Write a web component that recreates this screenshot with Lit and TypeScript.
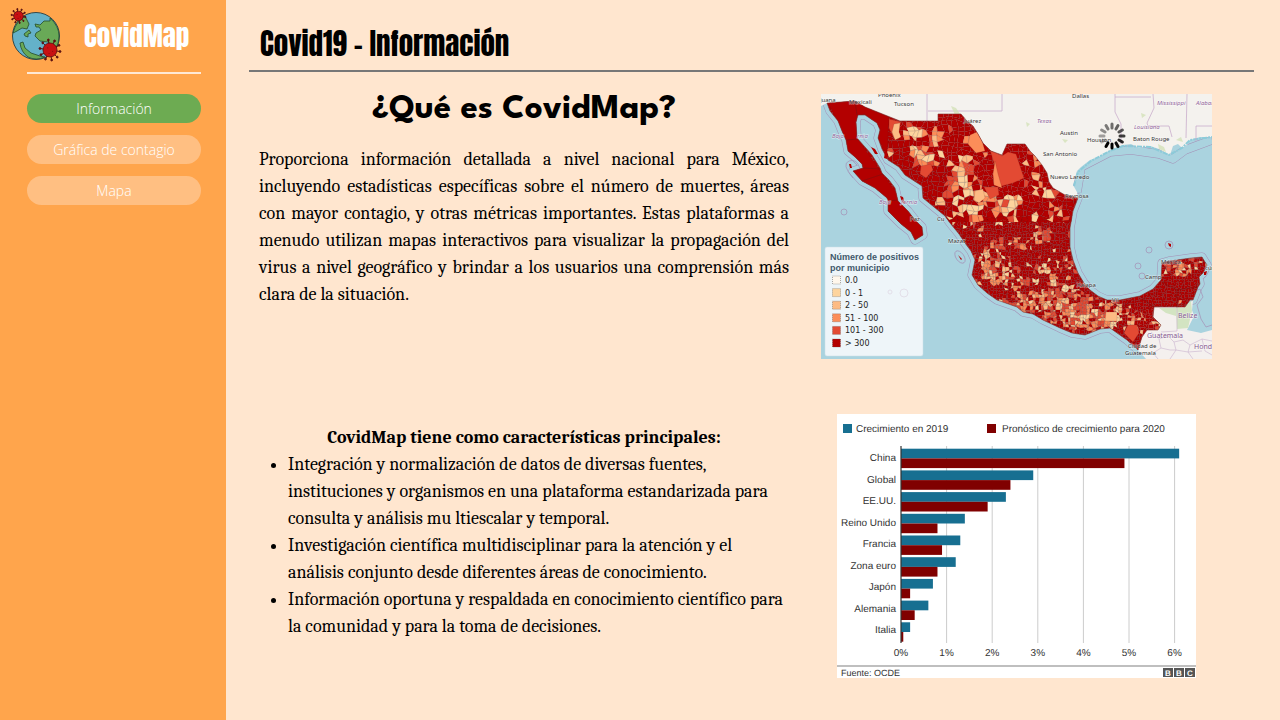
import { LitElement, html, svg, css } from "lit";
import { customElement, state } from "lit/decorators.js";

const MEXICO =
  "6,9 34,7 44,13 79,27 117,27 117,20 140,20 146,27 152,32 157,40 162,49 170,57 181,61 186,50 204,50 209,57 214,62 221,71 226,79 228,88 232,94 244,101 257,104 252,117 249,134 249,153 252,166 257,179 263,189 269,196 277,202 286,206 299,206 319,202 332,195 340,186 341,169 348,167 356,166 370,164 381,163 384,168 386,171 382,179 378,183 379,190 377,193 372,206 369,206 364,213 333,213 332,223 340,231 337,236 326,236 321,243 317,256 306,246 289,234 279,235 264,241 251,239 239,234 222,226 212,220 202,218 196,213 176,206 166,199 157,191 151,181 154,166 150,157 144,149 138,140 129,129 124,122 102,104 101,92 84,81 78,73 67,66 61,55 57,44 59,36 56,29 44,21 37,21 35,28 36,44 44,53 51,61 59,74 61,79 68,86 74,94 77,107 87,117 94,126 101,133 102,141 94,146 90,138 80,130 67,117 67,107 66,104 54,94 41,87 32,77 42,74 41,70 34,63 27,57 25,46 21,37 17,27 9,17";

const US_LAND =
  "0,0 391,0 391,43 379,43 369,46 366,51 361,54 357,50 352,52 349,61 338,55 329,52 318,54 310,50 302,51 289,56 278,63 269,66 260,73 256,77 252,91 256,98 257,104 200,110 81,45 60,24 34,9 6,9 0,12";

const SOUTH_LAND = "333,213 364,213 372,206 371,216 373,222 366,236 380,239 391,236 391,265 325,265 317,256 321,243 300,225";

const SHADES = ["#b30000", "#e34a33", "#fc8d59", "#fdbb84", "#fdd49e"];

// Areas with fewer cases: centre x, centre y, radius x, radius y, share of lighter cells
const ZONES = [
  [90, 40, 16, 12, 0.75],
  [99, 60, 20, 13, 0.75],
  [109, 46, 12, 16, 0.7],
  [135, 72, 17, 18, 0.7],
  [156, 95, 18, 16, 0.65],
  [125, 90, 10, 10, 0.5],
  [150, 115, 16, 10, 0.6],
  [185, 112, 18, 14, 0.6],
  [212, 68, 10, 14, 0.5],
  [222, 92, 16, 14, 0.55],
  [195, 88, 14, 14, 0.4],
  [232, 118, 14, 12, 0.5],
  [225, 140, 14, 12, 0.45],
  [174, 165, 18, 20, 0.65],
  [165, 180, 14, 14, 0.65],
  [192, 150, 18, 10, 0.35],
  [188, 185, 20, 10, 0.45],
  [205, 208, 22, 12, 0.6],
  [228, 180, 18, 16, 0.45],
  [248, 170, 10, 18, 0.5],
  [240, 210, 24, 22, 0.85],
  [264, 220, 26, 20, 0.9],
  [288, 220, 14, 16, 0.85],
  [309, 226, 14, 16, 0.55],
  [335, 228, 7, 6, 0.8],
  [355, 174, 14, 8, 0.8],
  [366, 166, 14, 6, 0.6],
  [384, 173, 3, 5, 0.8],
];

function noise(a: number, b: number, c = 0): number {
  const v = Math.sin(a * 127.1 + b * 311.7 + c * 74.7) * 43758.5453;
  return v - Math.floor(v);
}

function lightShare(x: number, y: number): number {
  let share = x < 60 || (x < 100 && y > 85) ? 0 : 0.05;
  for (const [cx, cy, rx, ry, p] of ZONES) {
    const d = ((x - cx) / rx) ** 2 + ((y - cy) / ry) ** 2;
    if (d < 1) share = Math.max(share, p * (1 - d * 0.45));
  }
  return share;
}

function cells(size: number, top: number, bottom: number) {
  const out = [];
  const corner = (i: number, j: number) =>
    `${((i + noise(i, j, 1) * 0.9) * size).toFixed(1)},${(top + (j + noise(i, j, 2) * 0.9) * size).toFixed(1)}`;
  const rows = Math.ceil((bottom - top) / size);
  for (let j = -1; j < rows; j++) {
    for (let i = 0; i * size < 391; i++) {
      const x = (i + 0.5) * size;
      const y = top + (j + 0.5) * size;
      // Neighbouring cells often share a shade, so they read as one district
      const joined = noise(i, j, 6) < 0.6;
      const gi = joined ? Math.floor(i / 2) : i;
      const gj = joined ? Math.floor(j / 2) : j;
      const light = noise(gi, gj, 3) < lightShare(x, y);
      const tone = light ? 1 + Math.floor(noise(gi, gj, 4) ** 1.4 * 4) : 0;
      out.push(svg`<polygon points="${corner(i, j)} ${corner(i + 1, j)} ${corner(i + 1, j + 1)} ${corner(i, j + 1)}" fill=${SHADES[tone]}></polygon>`);
    }
  }
  return out;
}

const PLACES: [number, number, string][] = [
  [-6, 8, "Tijuana"], [28, 10, "Mexicali"], [57, 3, "Phoenix"], [73, 12, "Tucson"], [143, 29, "Juárez"],
  [251, 4, "Dallas"], [239, 41, "Austin"], [266, 48, "Houston"], [312, 47, "Baton Rouge"],
  [222, 62, "San Antonio"], [229, 85, "Nuevo Laredo"], [244, 104, "Reynosa"],
  [89, 127, "Paz"], [116, 127, "Cu"], [127, 149, "Mazat"], [256, 193, "Xalapa"], [291, 208, "Vil"],
  [340, 170, "Mérida"], [324, 185, "Camp"], [384, 176, "cún"],
  [307, 254, "Ciudad de"], [304, 261, "Guatemala"],
];

const REGIONS: [number, number, string, number][] = [
  [216, 29, "Texas", 6], [336, 11, "Mississippi", 6], [375, 11, "Alabama", 6], [313, 35, "Louisiana", 6],
  [11, 44, "Baja", 6], [36, 44, "rnia", 6], [58, 110, "Baja", 6], [80, 110, "fornia", 6],
];

const COUNTRIES: [number, number, string][] = [[357, 224, "Belize"], [326, 244, "Guatemala"], [373, 255, "Hondura"]];

const LEGEND = [
  ["#fff7ec", "0.0"], ["#fdd49e", "0 - 1"], ["#fdbb84", "2 - 50"],
  ["#fc8d59", "51 - 100"], ["#e34a33", "101 - 300"], ["#b30000", "> 300"],
];

const GROWTH: [string, number, number][] = [
  ["China", 6.1, 4.9], ["Global", 2.9, 2.4], ["EE.UU.", 2.3, 1.9], ["Reino Unido", 1.4, 0.8],
  ["Francia", 1.3, 0.9], ["Zona euro", 1.2, 0.8], ["Japón", 0.7, 0.2], ["Alemania", 0.6, 0.3], ["Italia", 0.2, 0.05],
];

@customElement("case-map")
class CaseMap extends LitElement {
  static styles = css`
    :host { display: block; }
    .map { display: block; width: 100%; height: auto; }
    .place { font: 6px "Noto Sans", sans-serif; fill: #333; stroke: #fff; stroke-width: 1; stroke-opacity: 0.5; paint-order: stroke; }
    .region { font-family: "Noto Sans", sans-serif; font-style: italic; fill: #93679b; stroke: #fff; stroke-width: 1; stroke-opacity: 0.6; paint-order: stroke; }
    .country { font: 7px "Noto Sans", sans-serif; fill: #85598f; stroke: #fff; stroke-width: 1; stroke-opacity: 0.6; paint-order: stroke; }
    .heading { font: bold 9px "Liberation Sans", sans-serif; fill: #41586b; }
    .entry { font: 8px "DejaVu Sans", sans-serif; fill: #222; }
  `;

  render() {
    return html`
      <svg class="map" viewBox="0 0 391 265" role="img" aria-label="Número de positivos por municipio">
        <defs>
          <clipPath id="country"><polygon points=${MEXICO}></polygon></clipPath>
          <clipPath id="north"><rect width="391" height="128"></rect></clipPath>
        </defs>
        <rect width="391" height="265" fill="#aad3df"></rect>
        <g fill="none" stroke="#a58fb5" stroke-width="9" stroke-linejoin="round">
          <polygon points=${MEXICO}></polygon>
          <polyline points="256,98 260,73 289,58 310,56 338,60 352,65 364,56 391,46"></polyline>
        </g>
        <g fill="none" stroke="#aad3df" stroke-width="8" stroke-linejoin="round">
          <polygon points=${MEXICO}></polygon>
          <polyline points="256,98 260,73 289,58 310,56 338,60 352,65 364,56 391,46"></polyline>
        </g>
        <polygon points=${US_LAND} fill="#f4f2ee"></polygon>
        <polyline points="253,92 257,78 270,67 289,57 302,52 329,53 348,61 361,54 369,46 391,43" fill="none" stroke="#8ccbd9" stroke-width="2" stroke-dasharray="5 1 2 1"></polyline>
        <g fill="none" stroke="#c9adcb" stroke-width="0.8">
          <path d="M106,0V27M181,0V17H107M294,0V18L300,30V50M294,3H330M332,0L333,14L326,29L327,32H348L351,43M366,0L365,44M375,47V32H391"></path>
        </g>
        <g fill="#cfdfb0" opacity="0.7">
          <path d="M130,12l5,2 4,6 -5,1zM337,50l6,3 2,5 -7,-3zM205,28l4,2 -3,3zM241,45l6,1 -3,3zM320,19l5,2 -4,3zM355,46l5,-3 2,5z"></path>
        </g>
        <polygon points=${SOUTH_LAND} fill="#f4f0ee"></polygon>
        <path d="M338,214H355V222L345,219ZM355,213L362,214 370,207 371,217 367,234 356,235Z" fill="#d3e4c2"></path>
        <g fill="none" stroke="#c9b2cf" stroke-width="0.6">
          <path d="M356,213V237L340,238M330,238l8,7 9,-3 6,6 9,-2 7,5 12,-6 10,2M338,245l2,9 -8,5 5,6M353,248l2,8 -6,9M369,251l-2,7 5,7M381,245l3,12 7,4M340,254l9,2 6,0 12,2 14,-1"></path>
        </g>
        <g fill="none" stroke="#a58fb5" stroke-width="0.7">
          <circle cx="23" cy="118" r="3"></circle>
          <circle cx="328" cy="156" r="3"></circle>
          <circle cx="317" cy="172" r="3"></circle>
          <circle cx="321" cy="182" r="3"></circle>
          <circle cx="348" cy="151" r="4"></circle>
          <ellipse cx="139" cy="163" rx="4" ry="7" transform="rotate(-35 139 163)"></ellipse>
          <path d="M32,84Q20,70 28,67T39,75M374,197l5,-2 3,8 -6,8 4,14 5,8 6,-2"></path>
        </g>
        <g clip-path="url(#country)">
          <g stroke="#54201c" stroke-width="0.3" stroke-opacity="0.45">
            ${cells(3, 124, 265)}
            <g clip-path="url(#north)">${cells(5, 0, 132)}</g>
            <path d="M149,41L158,37 164,57 155,59 147,50Z" fill="#fc8d59"></path>
            <path d="M169,56L181,62 187,58 195,60 203,84 192,89 177,93 174,72Z" fill="#e34a33"></path>
            <path d="M174,67L172,80 173,91 181,94 177,80Z" fill="#fc8d59"></path>
            <path d="M68,25L80,28 78,36 73,44 68,34Z" fill="#e34a33"></path>
            <path d="M73,30L79,29 78,38 80,43 74,46 71,38Z" fill="#fdbb84"></path>
            <path d="M100,72L110,70 112,76 105,84 99,80Z" fill="#e34a33"></path>
            <path d="M154,97L162,95 164,104 158,109 153,106Z" fill="#fdbb84"></path>
            <path d="M163,93L177,93 178,101 169,105Z" fill="#e34a33"></path>
            <path d="M285,218L296,218 296,227 284,227Z" fill="#fdbb84"></path>
            <path d="M307,231L316,231 318,239 312,248 303,239Z" fill="#e34a33"></path>
            <path d="M7,9L34,6 44,13 68,23 66,62 57,44 59,34 44,20 36,22 36,44 60,78 101,133 102,142 94,147 66,117 30,77 27,57 17,27Z" fill="#b30000"></path>
          </g>
          <path d="M34,7L36,21M25,46L37,45M42,74L60,75M41,87L62,80M67,107L77,106M286,206L300,214 310,207M319,202L332,213M341,188L356,196 377,193M356,196V213" fill="none" stroke="#751010" stroke-width="0.5"></path>
        </g>
        <polygon points=${MEXICO} fill="none" stroke="#7f3434" stroke-width="0.6"></polygon>
        <g fill="#b30000">
          <path d="M50,53l4,2 3,5 -3,0zM64,58l3,2 -1,5 -3,-1zM28,70l2,0 1,4 -2,0zM79,102l3,1 2,7 -3,-2zM347,149l3,1 0,3 -2,-1zM383,178l3,-1 -1,4 -2,0zM137,161l4,4 -1,1z"></path>
        </g>
        ${PLACES.map(([x, y, name]) => svg`<text class="place" x=${x} y=${y}>${name}</text>`)}
        ${REGIONS.map(([x, y, name, size]) => svg`<text class="region" x=${x} y=${y} font-size=${size}>${name}</text>`)}
        ${COUNTRIES.map(([x, y, name]) => svg`<text class="country" x=${x} y=${y}>${name}</text>`)}
        <g stroke-width="3" stroke-linecap="round">
          ${Array.from({ length: 12 }, (_, i) => svg`<path d="M291,34V30" stroke="#000" stroke-opacity=${[0.55, 0.6, 0.65, 0.75, 0.85, 0.95, 1, 1, 0.25, 0.35, 0.42, 0.5][i]} transform="rotate(${i * 30} 291 42)"></path>`)}
        </g>
        <rect x="4" y="153" width="98" height="109" rx="2" fill="#f3f7fb" fill-opacity="0.93" stroke="#cbdde5" stroke-width="0.5"></rect>
        <g fill="none" stroke="#e3dfe9"><circle cx="69" cy="198" r="2"></circle><circle cx="83" cy="199" r="4"></circle></g>
        <text class="heading" x="9" y="166">Número de positivos</text>
        <text class="heading" x="9" y="177">por municipio</text>
        ${LEGEND.map(([color, label], i) => svg`
          <rect x="11.500" y=${182 + i * 12.6} width="8" height="8" fill=${color} stroke="#555" stroke-width="0.5" stroke-dasharray="1 1"></rect>
          <text class="entry" x="24" y=${189 + i * 12.6}>${label}</text>`)}
      </svg>
    `;
  }
}

@customElement("growth-chart")
class GrowthChart extends LitElement {
  static styles = css`
    :host { display: block; }
    .chart { display: block; width: 100%; height: auto; font: 10px "Liberation Sans", Arial, sans-serif; fill: #333; text-rendering: geometricPrecision; }
    .source { font-size: 9px; }
    .badge { font-size: 8px; font-weight: bold; fill: #fff; }
  `;

  render() {
    const unit = 45.6;
    return html`
      <svg class="chart" viewBox="0 0 359 264" role="img" aria-label="Crecimiento en 2019 y pronóstico para 2020">
        <rect width="359" height="264" fill="#fff"></rect>
        <rect x="6" y="10" width="9" height="9" fill="#176f91"></rect>
        <text x="19" y="18">Crecimiento en 2019</text>
        <rect x="150" y="10" width="9" height="9" fill="#800000"></rect>
        <text x="165" y="18">Pronóstico de crecimiento para 2020</text>
        ${[1, 2, 3, 4, 5, 6].map((n) => svg`<path d="M${64 + n * unit},32V229" stroke="#ccc"></path>`)}
        ${GROWTH.map(([name, now, next], i) => {
          const y = 34.7 + i * 21.7;
          return svg`
            <text x="59" y=${47 + i * 21.5} text-anchor="end">${name}</text>
            <rect x="64" y=${y} width=${now * unit} height="9.700" fill="#176f91"></rect>
            <rect x="64" y=${y + 9.7} width=${next * unit} height="9.700" fill="#800000"></rect>`;
        })}
        <path d="M64,32V229" stroke="#333" stroke-width="1.200"></path>
        ${[0, 1, 2, 3, 4, 5, 6].map((n) => svg`<text x=${64 + n * unit} y="242" text-anchor="middle">${n}%</text>`)}
        <path d="M0,252H359" stroke="#aaa" stroke-width="1.500"></path>
        <text class="source" x="4" y="262">Fuente: OCDE</text>
        ${["B", "B", "C"].map((letter, i) => svg`
          <rect x=${326 + i * 11} y="254" width="10" height="9" fill="#555"></rect>
          <text class="badge" x=${331 + i * 11} y="261.500" text-anchor="middle">${letter}</text>`)}
      </svg>
    `;
  }
}

const virus = (x: number, y: number, r: number) => svg`
  <g stroke="#5a0f10" fill="#5a0f10" stroke-width="1">
    ${Array.from({ length: 10 }, (_, i) => {
      const a = (i * Math.PI) / 5 + 0.15;
      const px = x + Math.cos(a) * r * 1.45;
      const py = y + Math.sin(a) * r * 1.45;
      return svg`<path d="M${x},${y}L${px},${py}"></path><circle cx=${px} cy=${py} r=${r * 0.13}></circle>`;
    })}
  </g>
  <circle cx=${x} cy=${y} r=${r} fill="#c80f12" stroke="#5a0f10" stroke-width="0.8"></circle>
  <path d="M${x - r * 0.4},${y - r * 0.3}h1M${x + r * 0.3},${y + r * 0.2}h1M${x - r * 0.2},${y + r * 0.5}h1" stroke="#8b0d10"></path>`;

@customElement("app-root")
class AppRoot extends LitElement {
  static styles = css`
    :host { display: block; }
    * { box-sizing: border-box; }
    .app { display: flex; min-height: 100vh; background: #ffe6cf; color: #000; }
    .sidebar { flex: 0 0 226px; background: #ffa54c; }
    .brand { display: flex; align-items: center; height: 72px; padding: 0 12px; gap: 22px; }
    .globe { width: 50px; height: 54px; flex: none; overflow: visible; }
    .name { color: #fff; }
    .name, .title {
      margin: 0;
      font-family: Anton, "Roboto Condensed", "Liberation Sans Narrow", Impact, sans-serif;
      font-weight: 400;
      white-space: nowrap;
    }
    .name { font-size: 27px; line-height: 72px; }
    .menu { display: flex; flex-direction: column; gap: 12px; margin: 0 25px 0 27px; padding-top: 20px; border-top: 2px solid #ffe9d5; }
    .item {
      height: 29px; border: 0; padding: 0; border-radius: 15px; background: #ffbf82; color: #fff;
      font: 300 14px/29px "Open Sans", sans-serif; cursor: pointer;
    }
    .item.active { background: #6dab52; }
    .main { flex: 1; min-width: 0; padding: 0 26px 0 23px; }
    .title { height: 72px; padding: 18px 11px 0; font-size: 29px; line-height: 52px; border-bottom: 2px solid #777; }
    .content { display: grid; grid-template-columns: minmax(0, 530px) minmax(0, 391px); column-gap: 32px; padding: 22px 10px 0; }
    .question { margin: 0 0 20px; text-align: center; font: 700 35px/32px "League Spartan", Lato, sans-serif; }
    .copy { font: 18px/27px Cambria, Caladea, "Liberation Serif", serif; }
    .text { margin: 0; text-align: justify; }
    .features { padding-top: 10px; }
    .subtitle { margin: 0; text-align: center; font: inherit; font-weight: bold; }
    .list { margin: 0; padding-left: 29px; }
    .row { min-height: 320px; }
    .figure { padding: 0 16px; }
  `;

  @state() private current = "Información";

  render() {
    return html`
      <div class="app">
        <aside class="sidebar">
          <div class="brand">
            <svg class="globe" viewBox="12 9 50 54" aria-hidden="true">
              <circle cx="36" cy="36" r="23.500" fill="#64b1c9" stroke="#263d42" stroke-width="0.9"></circle>
              <g fill="#69a957" stroke="#254b2c" stroke-width="0.8">
                <path d="M15,27Q18,20 25,16L29,24 27,29 22,28 17,31 13,33Z"></path>
                <path d="M35,24L40,25 44,21 50,21 50,18Q59,26 59,36 59,43 56,48L48,42 40,41 35,36 36,33 41,30 39,27 36,27Z"></path>
                <path d="M24,34L29,30 31,33 28,34 28,37 25,36Z"></path>
                <path d="M20,43L23,42 25,48 31,53 40,56 45,57Q36,61 28,57 21,52 20,43Z"></path>
              </g>
              ${virus(18.5, 16, 4.8)}
              ${virus(50, 50, 7)}
            </svg>
            <h2 class="name">CovidMap</h2>
          </div>
          <nav class="menu">
            ${["Información", "Gráfica de contagio", "Mapa"].map(
              (label) => html`<button class="item ${label === this.current ? "active" : ""}" @click=${() => (this.current = label)}>${label}</button>`
            )}
          </nav>
        </aside>
        <main class="main">
          <h1 class="title">Covid19 - Información</h1>
          <div class="content">
            <section class="row copy">
              <h2 class="question">¿Qué es CovidMap?</h2>
              <p class="text">Proporciona información detallada a nivel nacional para México, incluyendo estadísticas específicas sobre el número de muertes, áreas con mayor contagio, y otras métricas importantes. Estas plataformas a menudo utilizan mapas interactivos para visualizar la propagación del virus a nivel geográfico y brindar a los usuarios una comprensión más clara de la situación.</p>
            </section>
            <case-map></case-map>
            <section class="features copy">
              <h3 class="subtitle">CovidMap tiene como características principales:</h3>
              <ul class="list">
                <li>Integración y normalización de datos de diversas fuentes, instituciones y organismos en una plataforma estandarizada para consulta y análisis mu ltiescalar y temporal.</li>
                <li>Investigación científica multidisciplinar para la atención y el análisis conjunto desde diferentes áreas de conocimiento.</li>
                <li>Información oportuna y respaldada en conocimiento científico para la comunidad y para la toma de decisiones.</li>
              </ul>
            </section>
            <growth-chart class="figure"></growth-chart>
          </div>
        </main>
      </div>
    `;
  }
}
